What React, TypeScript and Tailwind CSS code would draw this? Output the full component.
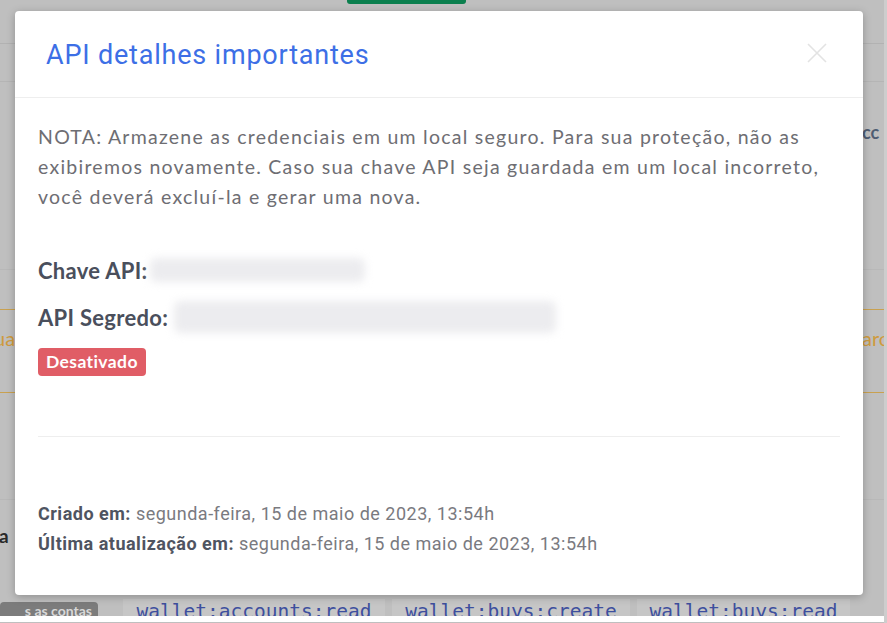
import React from "react";

export default function App() {
  return (
    <div className="relative h-[623px] w-[887px] overflow-hidden bg-[#bfbfbf] font-['Lato',sans-serif]">
      {/* background page (dimmed) */}
      <div className="flex h-full">
        <div className="flex w-[884px] flex-col">
          <div className="h-[44px] border-b border-[#b2b2b2]">
            <div className="ml-[347px] h-[4px] w-[119px] rounded-b-[3px] bg-[#0b7f4e]" />
          </div>
          <div className="h-[38px] border-b border-[#b5b5b5]" />
          <div className="flex h-[188px] items-start justify-end border-b border-[#b8b8b8] pt-[38px]">
            <span className="w-[22px] overflow-hidden text-[18px] font-bold leading-[24px] text-[#4f5d73]">cc</span>
          </div>
          <div className="h-[39px]" />
          <div className="flex h-[84px] items-start justify-between border-y border-[#c9a150] pt-[17px]">
            <span className="-ml-[6px] text-[20px] leading-[22px] text-[#cf9a3c]">ua</span>
            <span className="w-[22px] overflow-hidden text-[20px] leading-[22px] text-[#cf9a3c]">arc</span>
          </div>
          <div className="h-[107px] border-b border-[#b8b8b8]" />
          <div className="flex h-[99px] items-start pt-[26px]">
            <span className="-ml-[8px] text-[19px] font-bold leading-none text-[#2a2a2a]">ra</span>
          </div>
          <div className="flex h-[17px] items-start gap-[7px] overflow-hidden">
            <div className="mt-[3px] flex h-[14px] w-[98px] items-start justify-end overflow-hidden rounded-t-[4px] bg-[#7c7c7c] pr-[6px] pt-[2px]">
              <span className="text-[14px] font-bold leading-[14px] text-[#d8d8d8]">s as contas</span>
            </div>
            <div className="ml-[18px] flex h-[17px] w-[262px] items-start justify-center bg-[#c6c6c6] pt-[3px]">
              <span className="font-['DejaVu_Sans_Mono',monospace] text-[19.5px] leading-[20px] text-[#3d4f9e]">wallet:accounts:read</span>
            </div>
            <div className="flex h-[17px] w-[238px] items-start justify-center bg-[#c6c6c6] pt-[3px]">
              <span className="font-['DejaVu_Sans_Mono',monospace] text-[19.5px] leading-[20px] text-[#3d4f9e]">wallet:buys:create</span>
            </div>
            <div className="flex h-[17px] w-[213px] items-start justify-center bg-[#c6c6c6] pt-[3px]">
              <span className="font-['DejaVu_Sans_Mono',monospace] text-[19.5px] leading-[20px] text-[#3d4f9e]">wallet:buys:read</span>
            </div>
          </div>
          <div className="h-[6px] bg-white" />
        </div>
        <div className="w-[3px] bg-[#cdcdcd]" />
      </div>

      {/* modal */}
      <div className="absolute left-[15px] top-[11px] flex h-[584px] w-[848px] flex-col rounded-[4px] bg-white shadow-[0_2px_8px_rgba(0,0,0,0.25)]">
        <div className="flex h-[87px] items-center justify-between border-b border-[#eeeeee] pl-[31px] pr-[36px]">
          <h2 className="pt-[3px] font-['Roboto',sans-serif] text-[27px] font-normal tracking-[0.8px] text-[#3d6fe6]">
            API detalhes importantes
          </h2>
          <svg width="20" height="20" viewBox="0 0 20 20" className="mt-[-2px]">
            <path d="M1 1 L19 19 M19 1 L1 19" stroke="#e3e3e3" strokeWidth="1.6" />
          </svg>
        </div>
        <div className="flex flex-1 flex-col pl-[23px] pr-[23px]">
          <p className="mt-[24px] mr-[10px] text-[19.5px] leading-[30px] tracking-[1.25px] text-[#6e6e73]">
            NOTA: Armazene as credenciais em um local seguro. Para sua proteção, não as exibiremos novamente. Caso sua chave API seja guardada em um local incorreto, você deverá excluí-la e gerar uma nova.
          </p>
          <div className="mt-[45px] flex h-[26px] items-center">
            <span className="text-[22px] font-bold tracking-[0.3px] text-[#4a4f5c]">Chave API:</span>
            <div className="ml-[2px] h-[24px] w-[215px] rounded-[6px] bg-[#ececef] blur-[4px]" />
          </div>
          <div className="mt-[19px] flex h-[30px] items-center">
            <span className="text-[22px] font-bold tracking-[0.3px] text-[#4a4f5c]">API Segredo:</span>
            <div className="ml-[6px] h-[32px] w-[382px] rounded-[6px] bg-[#ececef] blur-[4px]" />
          </div>
          <div className="mt-[16px] flex">
            <span className="rounded-[4px] bg-[#e05d66] px-[8px] py-[3px] text-[17.5px] font-bold leading-[22px] tracking-[0.4px] text-white">
              Desativado
            </span>
          </div>
          <div className="mt-[60px] border-b border-[#eeeeee]" />
          <div className="mt-[66px] flex flex-col gap-[9px] font-['Roboto',sans-serif] text-[18px] leading-[21px] tracking-[0.5px]">
            <div>
              <span className="font-bold text-[#4f5461]">Criado em:</span>{" "}
              <span className="text-[#7a7a7f]">segunda-feira, 15 de maio de 2023, 13:54h</span>
            </div>
            <div>
              <span className="font-bold text-[#4f5461]">Última atualização em:</span>{" "}
              <span className="text-[#7a7a7f]">segunda-feira, 15 de maio de 2023, 13:54h</span>
            </div>
          </div>
        </div>
      </div>
    </div>
  );
}
